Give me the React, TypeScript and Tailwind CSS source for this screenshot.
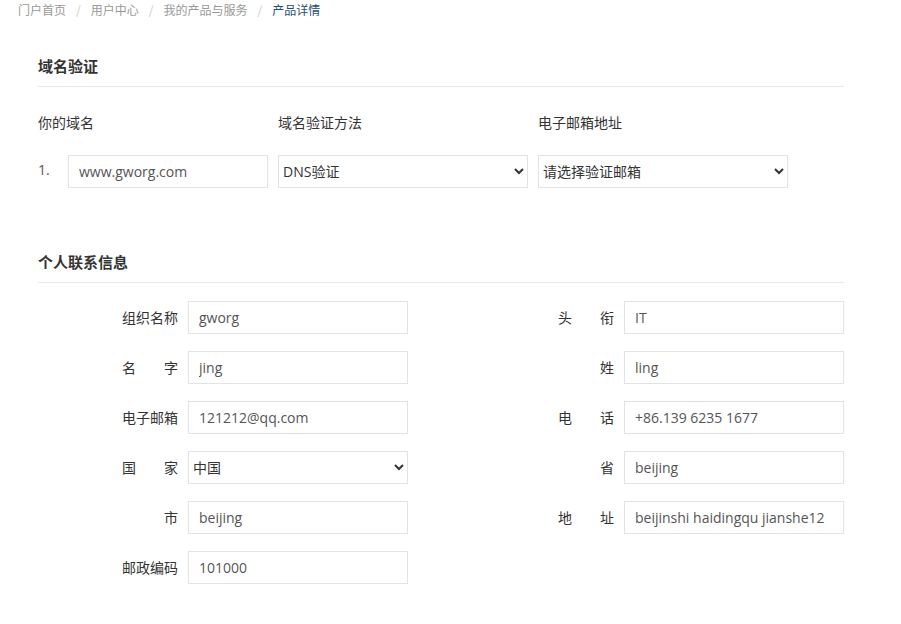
import React from 'react';

const cjk = '"Noto Sans CJK SC", "Noto Sans", sans-serif';
const inputFont = '"Open Sans", "Noto Sans CJK SC", sans-serif';

const inputCls =
  "h-[33px] border border-[#e3e3e3] bg-white px-[10px] text-[14px] text-[#555] outline-none";
const selectCls =
  "h-[33px] border border-[#e3e3e3] bg-white pl-0 pr-[6px] text-[14px] text-[#333] outline-none";

const Label: React.FC<{ text: string }> = ({ text }) => {
  const chars = text.split('');
  return (
    <div
      className={`flex w-[56px] shrink-0 text-[14px] text-[#333] ${
        chars.length === 1 ? 'justify-end' : 'justify-between'
      }`}
    >
      {chars.map((c, i) => (
        <span key={i}>{c}</span>
      ))}
    </div>
  );
};

const Field: React.FC<{ label: string; value?: string; select?: boolean }> = ({ label, value, select }) => (
  <div className="flex items-center gap-[10px]">
    <Label text={label} />
    {select ? (
      <select className={`${selectCls} w-[220px]`} style={{ fontFamily: inputFont }} defaultValue={value}>
        <option>{value}</option>
      </select>
    ) : (
      <input className={`${inputCls} w-[220px]`} style={{ fontFamily: inputFont }} defaultValue={value} />
    )}
  </div>
);

const SectionTitle: React.FC<{ title: string }> = ({ title }) => (
  <div className="border-b border-[#e8e8e8] pb-[10px]">
    <h3 className="text-[15px] font-bold leading-[20px] text-[#333]">{title}</h3>
  </div>
);

export default function App() {
  return (
    <div className="min-h-[624px] w-[901px] bg-white" style={{ fontFamily: cjk }}>
      <div className="flex h-[20px] items-center pl-[18px] text-[12px] leading-[20px] text-[#999]">
        <span>门户首页</span>
        <span className="px-[10px] text-[#ccc]">/</span>
        <span>用户中心</span>
        <span className="px-[10px] text-[#ccc]">/</span>
        <span>我的产品与服务</span>
        <span className="px-[10px] text-[#ccc]">/</span>
        <span className="text-[#1f4f6e]">产品详情</span>
      </div>

      <div className="ml-[38px] w-[806px]">
        <div className="mt-[36px]">
          <SectionTitle title="域名验证" />
        </div>

        <div className="mt-[25px] flex text-[14px] leading-[20px] text-[#333]">
          <div className="w-[240px]">你的域名</div>
          <div className="w-[260px]">域名验证方法</div>
          <div>电子邮箱地址</div>
        </div>

        <div className="mt-[23px] flex items-center">
          <span className="w-[30px] -translate-y-[2px] text-[14px] text-[#555]" style={{ fontFamily: inputFont }}>1.</span>
          <input className={`${inputCls} w-[200px]`} style={{ fontFamily: inputFont }} defaultValue="www.gworg.com" />
          <select className={`${selectCls} ml-[10px] w-[250px]`} style={{ fontFamily: inputFont }}>
            <option>DNS验证</option>
          </select>
          <select className={`${selectCls} ml-[10px] w-[250px]`} style={{ fontFamily: inputFont }}>
            <option>请选择验证邮箱</option>
          </select>
        </div>

        <div className="mt-[64px]">
          <SectionTitle title="个人联系信息" />
        </div>

        <div className="mt-[18px] grid grid-cols-[286px_286px] gap-x-[150px] gap-y-[17px] pl-[84px]">
          <Field label="组织名称" value="gworg" />
          <Field label="头衔" value="IT" />
          <Field label="名字" value="jing" />
          <Field label="姓" value="ling" />
          <Field label="电子邮箱" value="121212@qq.com" />
          <Field label="电话" value="+86.139 6235 1677" />
          <Field label="国家" value="中国" select />
          <Field label="省" value="beijing" />
          <Field label="市" value="beijing" />
          <Field label="地址" value="beijinshi haidingqu jianshe12" />
          <Field label="邮政编码" value="101000" />
        </div>
      </div>
    </div>
  );
}
